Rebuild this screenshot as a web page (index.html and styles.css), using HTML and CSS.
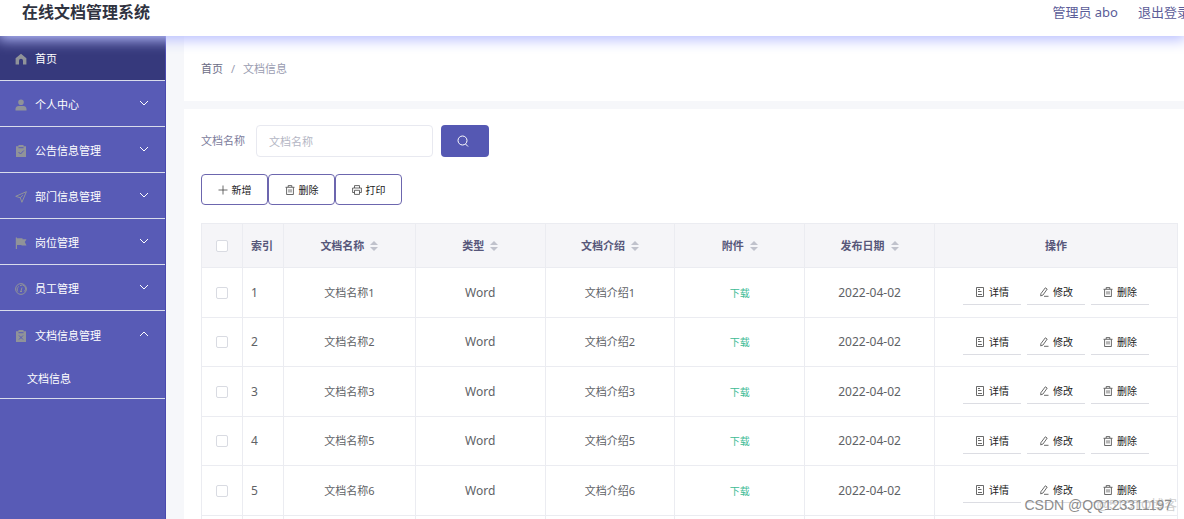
FILE: index.html
```html
<!DOCTYPE html>
<html lang="zh-CN">
<head>
<meta charset="utf-8">
<title>在线文档管理系统</title>
<link rel="stylesheet" href="styles.css">
</head>
<body>
<svg class="sprite" aria-hidden="true">
  <symbol id="down" viewBox="0 0 10 10"><path d="M1 3l4 4 4-4" fill="none" stroke="currentColor" stroke-width="1"/></symbol>
  <symbol id="up" viewBox="0 0 10 10"><path d="M1 7l4-4 4 4" fill="none" stroke="currentColor" stroke-width="1"/></symbol>
  <symbol id="sort" viewBox="0 0 8 10"><path d="M4 0l4 4H0zM4 10l4-4H0z" fill="currentColor"/></symbol>
  <symbol id="trash" viewBox="0 0 10 10"><path d="M.5 2.3h9M3.2 2V.6h3.6V2M1.6 2.5v7h6.8v-7M4 4.2v3.3M6 4.2v3.3" fill="none" stroke="currentColor" stroke-width=".8"/></symbol>
  <symbol id="doc" viewBox="0 0 10 10"><path d="M1.500.5h7v9h-7z" fill="none" stroke="currentColor" stroke-width=".8"/><path d="M3 2.500h2M3 4.500h3.500M3 7.500h4" fill="none" stroke="currentColor" stroke-width=".8"/></symbol>
  <symbol id="pen" viewBox="0 0 10 10"><path d="M6.3.8l1.9 1.3-4.3 6-2.2.8.2-2.2zM5 9.3h4.5" fill="none" stroke="currentColor" stroke-width=".8"/></symbol>
</svg>
<header class="topbar">
  <h1 class="title">在线文档管理系统</h1>
  <nav class="user"><a href="#">管理员 abo</a><a href="#">退出登录</a></nav>
</header>
<div class="layout">
  <aside class="sidebar">
    <a class="item active" href="#"><svg class="mark" viewBox="0 0 12 12"><path d="M6 .8L.6 5.3v6.1H4V7.8a2 2 0 0 1 4 0v3.600h3.400V5.300z" fill="currentColor"/></svg><span>首页</span></a>
    <button class="item"><svg class="mark" viewBox="0 0 12 12"><path d="M6 .5a2.8 2.8 0 1 1 0 5.6A2.8 2.8 0 0 1 6 .5zM.5 11.5V10c0-2 1.5-3 3-3h5c1.500 0 3 1 3 3v1.500z" fill="currentColor"/></svg><span>个人中心</span><svg class="arrow"><use href="#down"/></svg></button>
    <button class="item"><svg class="mark" viewBox="0 0 12 12"><path d="M1 1.200h2.500V0h5v1.200H11V12H1z" fill="currentColor"/><path d="M3.500 2.700h5M3.500 7l2 2 3.300-3.500" fill="none" stroke="#585bb6"/></svg><span>公告信息管理</span><svg class="arrow"><use href="#down"/></svg></button>
    <button class="item"><svg class="mark" viewBox="0 0 12 12"><path d="M11.400.7L.7 5.300l4.600 1.500 1.600 4.500zM5.300 6.800l2.500-2.600" fill="none" stroke="currentColor"/></svg><span>部门信息管理</span><svg class="arrow"><use href="#down"/></svg></button>
    <button class="item"><svg class="mark" viewBox="0 0 12 12"><path d="M.8.5H2v.7h5.500v1H11.500L9.800 5l1.700 3.500H6.500V8H2v4H.8z" fill="currentColor"/></svg><span>岗位管理</span><svg class="arrow"><use href="#down"/></svg></button>
    <button class="item"><svg class="mark" viewBox="0 0 12 12"><circle cx="6" cy="6" r="5.400" fill="none" stroke="currentColor"/><path d="M2.800 8.500a3.500 3.500 0 0 1 1-5M5 2.700a3.500 3.500 0 0 1 4.200 5.800M6 8l1-3.500M5 8.500h2" fill="none" stroke="currentColor"/></svg><span>员工管理</span><svg class="arrow"><use href="#down"/></svg></button>
    <div class="group">
      <button class="item"><svg class="mark" viewBox="0 0 12 12"><path d="M1 1.200h2.500V0h5v1.200H11V12H1z" fill="currentColor"/><path d="M3.500 2.700h5M4 5.500l4 4M8 5.500l-4 4" fill="none" stroke="#585bb6"/></svg><span>文档信息管理</span><svg class="arrow"><use href="#up"/></svg></button>
      <a class="subitem" href="#">文档信息</a>
    </div>
  </aside>
  <main class="main">
    <nav class="crumbs"><a href="#">首页</a><span>/</span><span>文档信息</span></nav>
    <section class="panel">
      <form class="search">
        <label for="name">文档名称</label>
        <input class="field" id="name" type="text" placeholder="文档名称">
        <button class="go" type="button" aria-label="查询"><svg viewBox="0 0 12 12"><circle cx="5.500" cy="5.500" r="4.500" fill="none" stroke="currentColor"/><path d="M8.500 9l2.500 2.500" stroke="currentColor"/></svg></button>
      </form>
      <div class="tools">
        <button><svg class="ico" viewBox="0 0 10 10"><path d="M5 .5v9M.5 5h9" stroke="currentColor" stroke-width=".8"/></svg>新增</button>
        <button><svg class="ico"><use href="#trash"/></svg>删除</button>
        <button><svg class="ico" viewBox="0 0 10 10"><path d="M2.500 3V.6h5V3M2.500 7.500H.6V3h8.800v4.500H7.500M2.500 5.300h5v4.100h-5z" fill="none" stroke="currentColor" stroke-width=".8"/></svg>打印</button>
      </div>
      <table class="grid">
        <colgroup><col class="c-check"><col class="c-index"><col class="c-name"><col class="c-data"><col class="c-data"><col class="c-data"><col class="c-data"><col class="c-ops"></colgroup>
        <thead><tr>
          <th><input type="checkbox" aria-label="全选"></th><th class="left">索引</th>
          <th>文档名称<svg class="sort"><use href="#sort"/></svg></th>
          <th>类型<svg class="sort"><use href="#sort"/></svg></th>
          <th>文档介绍<svg class="sort"><use href="#sort"/></svg></th>
          <th>附件<svg class="sort"><use href="#sort"/></svg></th>
          <th>发布日期<svg class="sort"><use href="#sort"/></svg></th>
          <th>操作</th>
        </tr></thead>
        <tbody>
          <tr><td><input type="checkbox" aria-label="选择"></td><td class="num left">1</td><td>文档名称1</td><td class="num">Word</td><td>文档介绍1</td><td><a class="load" href="#">下载</a></td><td class="num">2022-04-02</td><td><div class="ops"><button><svg class="ico"><use href="#doc"/></svg>详情</button><button><svg class="ico"><use href="#pen"/></svg>修改</button><button><svg class="ico"><use href="#trash"/></svg>删除</button></div></td></tr>
          <tr><td><input type="checkbox" aria-label="选择"></td><td class="num left">2</td><td>文档名称2</td><td class="num">Word</td><td>文档介绍2</td><td><a class="load" href="#">下载</a></td><td class="num">2022-04-02</td><td><div class="ops"><button><svg class="ico"><use href="#doc"/></svg>详情</button><button><svg class="ico"><use href="#pen"/></svg>修改</button><button><svg class="ico"><use href="#trash"/></svg>删除</button></div></td></tr>
          <tr><td><input type="checkbox" aria-label="选择"></td><td class="num left">3</td><td>文档名称3</td><td class="num">Word</td><td>文档介绍3</td><td><a class="load" href="#">下载</a></td><td class="num">2022-04-02</td><td><div class="ops"><button><svg class="ico"><use href="#doc"/></svg>详情</button><button><svg class="ico"><use href="#pen"/></svg>修改</button><button><svg class="ico"><use href="#trash"/></svg>删除</button></div></td></tr>
          <tr><td><input type="checkbox" aria-label="选择"></td><td class="num left">4</td><td>文档名称5</td><td class="num">Word</td><td>文档介绍5</td><td><a class="load" href="#">下载</a></td><td class="num">2022-04-02</td><td><div class="ops"><button><svg class="ico"><use href="#doc"/></svg>详情</button><button><svg class="ico"><use href="#pen"/></svg>修改</button><button><svg class="ico"><use href="#trash"/></svg>删除</button></div></td></tr>
          <tr><td><input type="checkbox" aria-label="选择"></td><td class="num left">5</td><td>文档名称6</td><td class="num">Word</td><td>文档介绍6</td><td><a class="load" href="#">下载</a></td><td class="num">2022-04-02</td><td><div class="ops"><button><svg class="ico"><use href="#doc"/></svg>详情</button><button><svg class="ico"><use href="#pen"/></svg>修改</button><button><svg class="ico"><use href="#trash"/></svg>删除</button></div></td></tr>
          <tr><td></td><td></td><td></td><td></td><td></td><td></td><td></td><td></td></tr>
        </tbody>
      </table>
    </section>
  </main>
</div>
<div class="watermark back">@51CTO博客</div>
<div class="watermark">CSDN @QQ123311197</div>
</body>
</html>
```
FILE: styles.css
```css
* { box-sizing: border-box; }
body {
  margin: 0;
  height: 100vh;
  display: flex;
  flex-direction: column;
  overflow: hidden;
  position: relative;
  background: #fff;
  color: #606266;
  font: 11px/16px "Noto Sans", "Noto Sans CJK SC", sans-serif;
}
button, input { font: inherit; color: inherit; margin: 0; }
button { background: none; border: 0; padding: 0; cursor: pointer; }
a { color: inherit; text-decoration: none; }
.sprite { display: none; }

.topbar {
  position: relative;
  z-index: 1;
  flex: none;
  height: 36px;
  display: flex;
  justify-content: space-between;
  padding: 0 0 0 22px;
  background: #fff;
  box-shadow: 0 2px 14px 2px #b9bfff;
}
.title { margin: 0; font-size: 16px; line-height: 24px; color: #303340; }
.user {
  display: flex;
  gap: 20px;
  margin-right: -6px;
  font-size: 13px;
  line-height: 24px;
  white-space: nowrap;
  color: #5b5c98;
}
.user a:last-child { margin-right: 0; }

.layout { flex: 1; min-height: 0; display: flex; }
.sidebar { flex: none; width: 166px; background: #585bb6; border-right: 1px solid #4a4aae; color: #fff; }
.item {
  display: flex;
  align-items: center;
  width: 100%;
  height: 46px;
  padding: 2px 16px 0 15px;
  gap: 8px;
  border-bottom: 1px solid #d9dcec;
  text-align: left;
}
.item.active { height: 45px; background: #36397c; }
.mark { width: 12px; height: 12px; color: #909399; }
.arrow { width: 10px; height: 10px; margin: 0 0 4px auto; }
.group { border-bottom: 1px solid #d9dcec; }
.group .item { border-bottom: 0; height: 48px; }
.subitem { display: block; padding: 0 27px; line-height: 39px; }

.main { flex: 1; min-width: 0; padding-left: 18px; background: #f6f7fa; }
.crumbs {
  display: flex;
  align-items: center;
  gap: 8px;
  height: 65px;
  padding: 0 17px;
  background: #fff;
  color: #999bb0;
}
.crumbs a { color: #6b6d86; }
.panel { margin-top: 8px; padding: 16px 6px 0 17px; background: #fff; }
.search { display: flex; align-items: center; color: #7c7c9c; }
.field {
  width: 177px;
  height: 32px;
  margin: 0 8px 0 11px;
  padding: 0 12px;
  border: 1px solid #e8e9f0;
  border-radius: 4px;
  background: #fff;
  outline: 0;
}
.field::placeholder { color: #b4b6c4; }
.go {
  display: grid;
  place-items: center;
  width: 48px;
  height: 32px;
  padding-right: 4px;
  border-radius: 4px;
  background: #5558b3;
  color: #fff;
}
.go svg { width: 12px; height: 12px; }
.tools { display: flex; margin: 17px 0 18px; font-size: 10px; color: #222; }
.tools button {
  display: flex;
  align-items: center;
  justify-content: center;
  gap: 4px;
  width: 67px;
  height: 31px;
  border: 1px solid #6c66ae;
  border-radius: 4px;
}
.ico { width: 10px; height: 10px; color: #444; }

.grid { width: 100%; table-layout: fixed; border-collapse: collapse; text-align: center; }
.c-check, .c-index { width: 41px; }
.c-name { width: 13.5%; }
.c-data { width: 13.3%; }
.grid th, .grid td { padding: 0; border: 1px solid #ebecf1; }
.grid th { height: 44px; background: #f5f5f8; color: #57577a; font-weight: 700; }
.grid td { height: 49px; }
.grid tr:nth-child(odd) td { height: 50px; }
.grid .left { text-align: left; padding-left: 8px; }
.grid .num { font-size: 12px; }
.sort { width: 8px; height: 10px; margin-left: 6px; vertical-align: -1px; color: #c0c2cc; }
.load { color: #3dbb95; font-size: 10px; }
input[type="checkbox"] {
  appearance: none;
  display: block;
  width: 12px;
  height: 12px;
  margin: 0 auto;
  border: 1px solid #d9dbe2;
  border-radius: 2px;
  background: #fff;
}
.ops { display: flex; justify-content: center; gap: 6px; font-size: 10px; color: #222; }
.ops button {
  display: flex;
  align-items: center;
  justify-content: center;
  gap: 4px;
  width: 58px;
  height: 25px;
  border-bottom: 1px solid #dcdde3;
}
.watermark {
  position: absolute;
  right: 12px;
  bottom: 4px;
  font: 14px/20px "Liberation Sans", "Noto Sans CJK SC", sans-serif;
  color: #8c8c8c;
}
.watermark.back { right: 7px; font-size: 13px; color: #d0d0d0; }
```
